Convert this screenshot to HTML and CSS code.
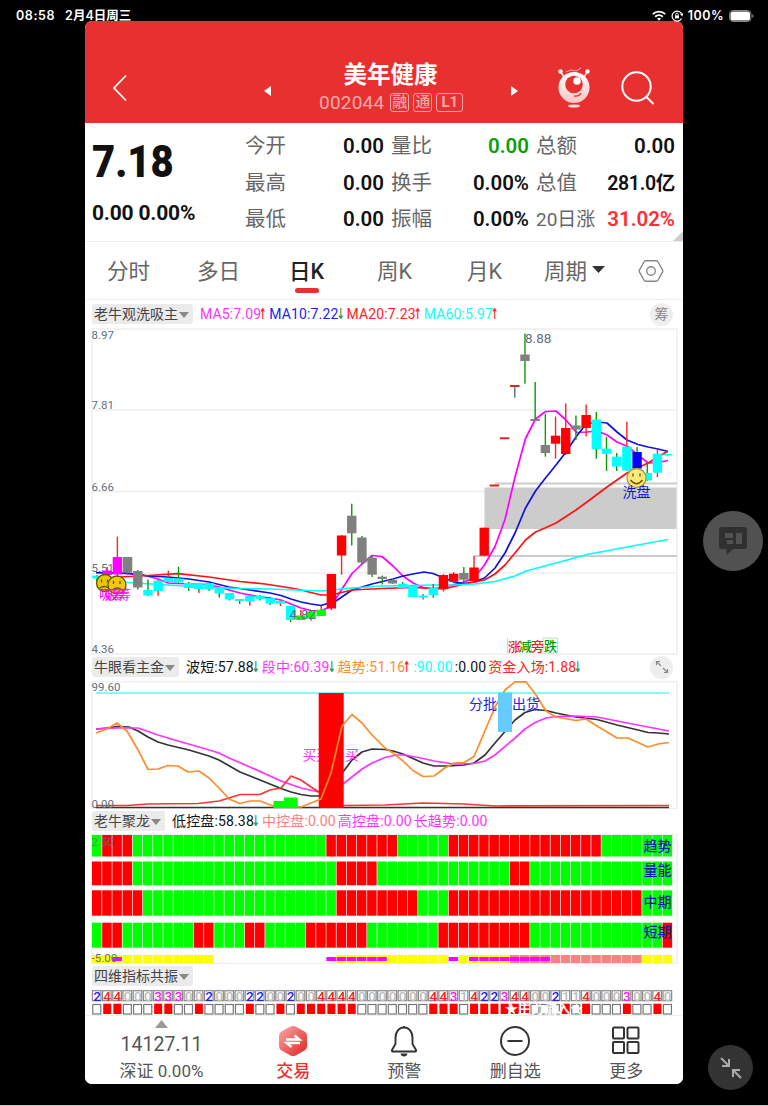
FILE: index.html
```html
<!DOCTYPE html>
<html lang="zh-CN">
<head>
    <meta charset="UTF-8">
    <meta name="viewport" content="width=device-width, initial-scale=1.0">
    <title>美年健康 002044</title>
    <link rel="stylesheet" href="styles.css">
</head>
<body>
    <div class="status">
        <span class="clock">08:58</span>
        <span class="date">2月4日周三</span>
        <span class="status-right">
            <svg width="14" height="11" viewBox="0 0 14 11" fill="none" stroke="#fff" stroke-width="1.9"><path d="M.8 4.1a9 9 0 0 1 12.4 0M3.2 6.7a5.6 5.6 0 0 1 7.6 0"/><path d="M5 8.6a3 3 0 0 1 4 0L7 10.8z" fill="#fff" stroke="none"/></svg>
            <svg width="12" height="12" viewBox="0 0 12 12" fill="none" stroke="#fff" stroke-width="1.2"><path d="M10.5 8.5A5 5 0 1 1 11 5M9.6 3.8L11 5.4l.8-2"/><rect x="4" y="5.4" width="4" height="3" fill="#fff" stroke="none"/><path d="M4.7 5.5V4.4a1.3 1.3 0 0 1 2.6 0v1.1" stroke-width=".9"/></svg>
            <span class="percent">100%</span>
            <svg width="25" height="12" viewBox="0 0 25 12"><rect x=".5" y=".5" width="21.5" height="11" rx="3.6" fill="none" stroke="#888"/><rect x="1.5" y="1.5" width="19.5" height="9" rx="2.6" fill="#fff"/><path d="M23.3 4v4q1.3-.6 1.3-2t-1.3-2" fill="#888"/></svg>
        </span>
    </div>

    <div class="app">
        <header class="header">
            <svg class="back" width="16" height="28" viewBox="0 0 16 28" fill="none" stroke="#fff" stroke-width="1.8"><path d="M15 1.5L3 14l12 12.5"/></svg>
            <svg class="prev" width="7" height="10" viewBox="0 0 7 10"><path d="M7 0v10L0 5z" fill="#fff"/></svg>
            <div class="title">
                <h1>美年健康</h1>
                <div class="code"><span class="number">002044</span><i>融</i><i>通</i><i class="level">L1</i></div>
            </div>
            <svg class="next" width="7" height="10" viewBox="0 0 7 10"><path d="M0 0v10l7-5z" fill="#fff"/></svg>
            <svg class="robot" width="34" height="42" viewBox="0 0 34 42">
                <defs><linearGradient id="body" x2="0" y2="1"><stop stop-color="#fff"/><stop offset="1" stop-color="#ffc4c4"/></linearGradient></defs>
                <path d="M4 5l4 7M30 5l-4 7" stroke="#fff" stroke-width="1.5"/>
                <circle cx="3.5" cy="4.5" r="2.2" fill="#fff"/><circle cx="30.5" cy="4.5" r="2.2" fill="#fff"/>
                <path d="M9 5l5-2 5 1 5-3" fill="none" stroke="#ffb5b5"/>
                <ellipse cx="17" cy="20.5" rx="15.5" ry="15.5" fill="url(#body)"/>
                <circle cx="17" cy="17.5" r="8.8" fill="#e83030"/><circle cx="20" cy="14" r="3.8" fill="#fff"/>
                <path d="M17 29q5 1 7-3" fill="none" stroke="#e83030" stroke-width="1.3"/>
                <ellipse cx="17" cy="39" rx="6" ry="1.6" fill="#ffdada"/>
            </svg>
            <svg class="search" width="34" height="34" viewBox="0 0 34 34" fill="none" stroke="#fff" stroke-width="2"><circle cx="15.5" cy="15.5" r="14.2"/><path d="M25 25.5l7.500 7.500"/></svg>
        </header>

        <section class="quote">
            <div class="price">
                <strong>7.18</strong>
                <span>0.00 0.00%</span>
            </div>
            <dl class="first">
                <dt>今开</dt><dd>0.00</dd>
                <dt>最高</dt><dd>0.00</dd>
                <dt>最低</dt><dd>0.00</dd>
            </dl>
            <dl class="second">
                <dt>量比</dt><dd class="down">0.00</dd>
                <dt>换手</dt><dd>0.00%</dd>
                <dt>振幅</dt><dd>0.00%</dd>
            </dl>
            <dl class="third">
                <dt>总额</dt><dd>0.00</dd>
                <dt>总值</dt><dd class="cap">281.0亿</dd>
                <dt class="rise">20日涨</dt><dd class="up">31.02%</dd>
            </dl>
            <span class="corner"></span>
        </section>

        <nav class="tabs">
            <span>分时</span>
            <span>多日</span>
            <span class="active">日K</span>
            <span>周K</span>
            <span>月K</span>
            <span class="period">周期<svg width="13" height="7" viewBox="0 0 13 7"><path d="M0 0h13L6.5 7z" fill="#333"/></svg></span>
            <svg class="setting" width="26" height="24" viewBox="0 0 28 24" fill="none" stroke="#888" stroke-width="1.5"><path d="M8.200 1h11.600q1 0 1.500.8L26.500 11q.5 1 0 2l-5.200 9.200q-.5.8-1.500.8H8.200q-1 0-1.500-.8L1.500 13q-.5-1 0-2l5.200-9.200q.5-.8 1.500-.8z"/><circle cx="14" cy="12" r="4.600"/></svg>
        </nav>

        <section class="panel kline">
            <div class="legend">
                <button>老牛观洗吸主</button>
                <span class="magenta">MA5:7.09</span><b class="rising">↑</b>
                <span class="blue">MA10:7.22</span><b class="falling">↓</b>
                <span class="red">MA20:7.23</span><b class="rising">↑</b>
                <span class="cyan">MA60:5.97</span><b class="rising">↑</b>
                <em class="round">筹</em>
            </div>
            <svg width="598" height="327" viewBox="85 328 598 327">
                <g class="grid">
                    <rect x="92" y="329" width="585" height="325"/>
                    <path d="M92 410h585M92 491.500h585M92 573h585"/>
                </g>
                <g class="axis">
                    <text x="91.500" y="339">8.97</text>
                    <text x="91.500" y="409">7.81</text>
                    <text x="91.500" y="490.500">6.66</text>
                    <text x="91.500" y="572">5.51</text>
                    <text x="91.500" y="653">4.36</text>
                </g>
                <rect x="484.500" y="487.500" width="192" height="41.500" fill="#ccc"/>
                <path d="M495 483.500h182M474 556h203" stroke="#ccc" stroke-width="1.800"/>
                <g class="line">
                    <polyline stroke="#f0f" points="96,573 117,573 143,575 158,579 168,583 178.500,583.500 199,584 209,585 219,587 229,590 240,593 250,595 260,597 270,598 281,600 291,604 301,608 311,610.500 321,611 331,606 342,589 352,573.500 362,564 372,555.500 382,556.500 393,566 403,576 413,583 423,587.500 433,589 444,587 464,582 474,578 484.500,565 495,546.500 505,519.500 515,477 525.500,438.500 535.500,419 545.500,411.500 556,411 566,420 576.500,432.500 586.500,432 597,431 607,435 617,442 627.500,446.500 638,455 648,463 658,462.500 668,460.500"/>
                    <polyline stroke="#11d" points="96,572.500 127,573 148,576 168,577 189,579 209,582 229,587 250,590 270,593 281,595.500 291,599 301,602 311,604 321,605.500 336,601 352,590 372,584 393,579 403,576 413,574 424,572 433,573.500 444,578 454,582 464,583.500 474,582 484.500,578 495,568 505,553 515,533 525.500,508 535.500,491 545.500,478 556,465 566,452 576,437 586,424 597,422 607,423 617,432 627,440 638,444.500 648,447 658,449 668,451.500"/>
                    <polyline stroke="#f11" points="120,577 148,575.500 178,573.700 209,577 240,581.500 265,584 291,588 301,590 321,595 331,595 352,590 382,588.500 413,587.500 444,589 464,584 475,582 484.500,580 495,574 505,565 515,553 525.500,540 535.500,532 545,528 556,523 576,510 587,502 607,487 627,473 648,463 668,451"/>
                    <polyline stroke="#0ff" points="96,580 127,582.500 168,585 199,587 240,588.500 270,589 321,591 352,588 382,586 434,585 454,585 475,584 495,581.500 515,576 526,571 556,563 587,554.500 627,547 668,539.500"/>
                </g>
                <g id="candles"></g>
                <g class="axis extreme">
                    <text x="289.500" y="619">4.82</text>
                    <text x="525" y="343">8.88</text>
                </g>
                <g class="face">
                    <circle cx="105" cy="583" r="8.500" fill="#e8c800"/><path d="M101.500 579.500v3M107.500 579.500v3M100 588q4-3 9 0"/>
                    <circle cx="117" cy="585" r="9" fill="#f0c814"/><path d="M113.500 581v3M120 581v3M112.500 590q5-4 9 0"/>
                    <circle cx="636.500" cy="478" r="9.500" fill="#ffe97a" stroke="#aa9840"/><path d="M633 473.500v3M640 473.500v3M630.500 480q6 7.500 12 0"/>
                </g>
                <text x="99" y="599" class="tag" fill="#f0f">吸筹</text>
                <text x="105" y="599" class="tag" fill="#f0f">吸筹</text>
                <text x="622.500" y="497" class="mark" fill="#11d">洗盘</text>
                <g class="events">
                    <path d="M507.500 638v15M543 638h14.500v15H543z" fill="none" stroke="#bde0bd"/>
                    <text x="508" y="651" fill="#e22">涨</text>
                    <text x="519" y="651" fill="#090">减</text>
                    <text x="531" y="651" fill="#e22">旁</text>
                    <text x="544" y="651" fill="#090">跌</text>
                </g>
            </svg>
        </section>

        <section class="panel money">
            <div class="legend">
                <button>牛眼看主金</button>
                <span>波短:57.88</span><b class="falling">↓</b>
                <span class="magenta">段中:60.39</span><b class="falling">↓</b>
                <span class="orange">趋势:51.16</span><b class="rising">↑</b>
                <span class="cyan">:90.00</span>
                <span>:0.00</span>
                <span class="red">资金入场:1.88</span><b class="falling">↓</b>
                <em class="round"><svg width="14" height="14" viewBox="0 0 14 14" fill="none" stroke="#888" stroke-width="1.200"><path d="M6 6L1.500 1.500M1.500 5V1.500H5M8 8l4.500 4.500M12.500 9v3.500H9"/></svg></em>
            </div>
            <svg width="598" height="128" viewBox="85 681 598 128">
                <rect class="frame" x="92" y="681.500" width="585" height="127"/>
                <g class="line">
                    <path d="M96 693h573" stroke="#5ff"/>
                    <path d="M96 807.500h573" stroke="#333"/>
                    <polyline stroke="#333" points="96,729 107,728 117,726.500 129,727 138,731 148,737 158,742 168,745 189,750 209,756 219,760 240,772 260,780 281,788.500 291,792 301,794.500 311,796 319,796 343,772 352,760 362,752 372,749 385,749.500 393,751 403,754 413,758.500 423,763 434,766 449,766 464,765 474,763 485,755 495,743 505,731.500 515,720 525,712.500 535,709.500 546,710.500 556,713 576,717 597,719.500 617,725 638,730 648,732.500 658,733 669,734"/>
                    <polyline stroke="#f3f" points="96,729 117,728 138,728 158,735 178,741 199,747 219,753 229,758 250,767 281,781 301,788 319,792 343,784 362,769 372,763 385,757.500 396,755 405,755 423,758.500 434,761 454,764 474,763.500 485,761 495,755 515,738 525,729 535,722.500 546,718 556,716.500 576,716 597,717 617,721 648,727 669,731"/>
                    <polyline stroke="#f33" points="96,805.500 127,805.500 148,804 198,803.500 219,801 229,798 240,794.500 260,794.500 270,790 281,788 291,776 301,780 311,787 319,792 343,805.500 385,805 423,803 464,804 495,806 669,805.500"/>
                </g>
                <g class="word" fill="#f3f"><text x="302.500" y="760">买</text><text x="316" y="760">买</text><text x="345" y="760">买</text></g>
                <rect x="318.700" y="693" width="25" height="115" fill="#f00"/>
                <g class="line"><polyline stroke="#ff8c2b" points="96,733 107,729 117,723 127,731 138,750 148,769.500 158,769 168,765.500 178,766 188,772 199,771 209,778 219,788 229,799 240,803.500 250,801 260,801 270,805 281,807 301,807 321,799 331,773 342,726 352,714.500 362,723 372,735 385,748 393,753 403,761 413,770.500 423,776.500 434,776 444,768.500 454,763 464,762.500 474,756.500 484,733 495,707 505,690 515,681.800 526,681.800 536,695 546,711 556,717 576,720.500 586,719 597,726 617,738 628,738 648,747 658,744 669,742.500"/></g>
                <path d="M273.500 801h10.500v-3.500h13.700v10.500h-24.200z" fill="#0f0"/>
                <rect x="498" y="692.500" width="14" height="39.500" fill="#6cf"/>
                <g class="word" fill="#22e"><text x="469" y="709">分批</text><text x="512" y="709">出货</text></g>
                <g class="axis"><text x="91.500" y="691">99.60</text><text x="91.500" y="807.500">0.00</text></g>
            </svg>
        </section>

        <section class="panel trend">
            <div class="legend">
                <button>老牛聚龙</button>
                <span>低控盘:58.38</span><b class="falling">↓</b>
                <span class="salmon">中控盘:0.00</span>
                <span class="magenta">高控盘:0.00</span>
                <span class="magenta">长趋势:0.00</span>
            </div>
            <svg width="598" height="130" viewBox="85 834 598 130">
                <rect class="frame" x="92" y="834.500" width="585" height="129"/>
                <g id="strips"></g>
                <g class="word strong" fill="#0b1bb0"><text x="643.500" y="851">趋势</text><text x="643.500" y="875">量能</text><text x="643.500" y="907">中期</text><text x="643.500" y="937">短期</text></g>
                <g class="axis"><text x="91.500" y="845.500" opacity=".7">2.50</text><text x="91.500" y="962">-5.00</text></g>
            </svg>
        </section>

        <section class="panel resonance">
            <div class="legend">
                <button>四维指标共振</button>
            </div>
            <svg width="598" height="26" viewBox="85 989 598 26">
                <g id="cells"></g>
                <text class="inflow" x="505" y="1012.500">★主力流入★</text>
            </svg>
        </section>

        <footer class="bottom">
            <div class="index">
                <svg width="13" height="8" viewBox="0 0 13 8"><path d="M6.500 0L13 8H0z" fill="#999"/></svg>
                <strong>14127.11</strong>
                <span>深证 0.00%</span>
            </div>
            <div class="item trade">
                <svg width="30" height="32" viewBox="0 0 30 32">
                    <defs><linearGradient id="hex" x2="1" y2="1"><stop stop-color="#f8aaa6"/><stop offset="1" stop-color="#e2201f"/></linearGradient></defs>
                    <path d="M12.500 1.600q2.500-1.400 5 0l9 5q2.500 1.500 2.500 4.400v10q0 2.900-2.500 4.400l-9 5q-2.500 1.400-5 0l-9-5Q1 23.900 1 21V11q0-2.900 2.500-4.400z" fill="url(#hex)"/>
                    <path d="M8 14.500h13.500l-5-4M22 18H8.500l5 4" fill="none" stroke="#fff" stroke-width="2.300"/>
                </svg>
                <span>交易</span>
            </div>
            <div class="item">
                <svg width="28" height="32" viewBox="0 0 28 32" fill="none" stroke="#333" stroke-width="1.900"><path d="M14 1v2M14 2.500C8 2.500 5.500 8 5.500 13v6L2 25q-.5 1.500.8 1.500h22.400q1.300 0 .8-1.500l-3.500-6v-6C22.500 8 20 2.500 14 2.500z"/><path d="M10.500 28.500h7Q17 31.500 14 31.500t-3.500-3z" fill="#333" stroke="none"/></svg>
                <span>预警</span>
            </div>
            <div class="item">
                <svg width="32" height="32" viewBox="0 0 32 32" fill="none" stroke="#333" stroke-width="2"><circle cx="16" cy="16" r="14"/><path d="M8.500 16h15"/></svg>
                <span>删自选</span>
            </div>
            <div class="item">
                <svg width="30" height="32" viewBox="0 0 30 32" fill="none" stroke="#333" stroke-width="2"><rect x="2" y="2.500" width="11" height="11" rx="1"/><rect x="16.500" y="2.500" width="11" height="11" rx="1"/><rect x="2" y="17" width="11" height="11" rx="1"/><rect x="16.500" y="17" width="11" height="11" rx="1"/></svg>
                <span>更多</span>
            </div>
        </footer>
    </div>

    <div class="floating message">
        <svg width="30" height="30" viewBox="0 0 30 30"><path d="M4 1h22q3 0 3 3v16q0 3-3 3H15l-6.500 6V23H4q-3 0-3-3V4q0-3 3-3z" fill="#303030"/><path d="M7 7h8v5H7zM9 14h6v4H9zM18 7h6v11h-6z" fill="#515151"/></svg>
    </div>
    <div class="floating shrink">
        <svg width="22" height="22" viewBox="0 0 22 22" fill="none" stroke="#aaa" stroke-width="2"><path d="M1 1l8 8M9 2v7H2M21 21l-8-8M13 20v-7h7"/></svg>
    </div>
    <script src="script.js"></script>
</body>
</html>
```
FILE: styles.css
```css
body {
    position: relative;
    width: 768px;
    height: 1105px;
    margin: 0;
    background: #000;
    border-bottom: 1px solid #ccc;
    font-family: Roboto, "Noto Sans CJK SC", sans-serif;
    color: #111;
    overflow: hidden;
}

h1, dl, dd {
    margin: 0;
}

svg {
    display: block;
    flex-shrink: 0;
}

.status {
    display: flex;
    align-items: center;
    height: 21px;
    padding: 5px 14px 0 16px;
    margin-bottom: -5px;
    color: #fff;
    font: 600 12.500px/21px Inter, "Noto Sans CJK SC", sans-serif;
}

.clock {
    letter-spacing: 0.6px;
    margin-right: 10px;
}

.status-right {
    display: flex;
    align-items: center;
    gap: 5px;
    margin-left: auto;
}

.percent {
    letter-spacing: 0.5px;
}

.app {
    width: 598px;
    height: 1063px;
    margin-left: 85px;
    background: #fff;
    border-radius: 7px;
    overflow: hidden;
}

/* Header */
.header {
    display: flex;
    box-sizing: border-box;
    height: 102px;
    padding: 32px 28px 0 26px;
    align-items: center;
    background: #e83030;
    color: #fff;
}

.prev, .next {
    margin-top: 6px;
}

.prev {
    margin-left: 137px;
}

.title {
    width: 146px;
    margin: 0 47px 0 48px;
    text-align: center;
    white-space: nowrap;
}

.title h1 {
    margin-top: -2px;
    padding-right: 2px;
    font-size: 23.5px;
    line-height: 30px;
}

.code {
    display: flex;
    align-items: center;
    gap: 4px;
    height: 24px;
    color: #f6a9a9;
}

.code .number {
    margin-right: 2px;
    font-size: 19px;
    letter-spacing: 0.2px;
}

.code i {
    box-sizing: border-box;
    width: 19px;
    height: 19px;
    border: 1px solid #f6a9a9;
    border-radius: 3px;
    font: 500 15px/17px Roboto, "Noto Sans CJK SC", sans-serif;
}

.code .level {
    width: 27px;
    font-weight: 700;
}

.robot {
    margin-left: 39px;
}

.search {
    margin-left: 30px;
}

/* Quote */
.quote {
    position: relative;
    display: flex;
    height: 118px;
    border-bottom: 1px solid #eee;
}

.price {
    width: 160px;
    padding-left: 7px;
    box-sizing: border-box;
    font-weight: 700;
}

.price strong {
    display: block;
    margin-top: 11px;
    font-size: 44px;
    line-height: 56px;
    transform: scaleX(0.91);
    transform-origin: left;
}

.price span {
    display: block;
    margin-top: 9px;
    font-size: 21px;
    line-height: 28px;
    letter-spacing: -0.2px;
}

.quote dl {
    display: grid;
    grid-template-columns: auto auto;
    grid-auto-rows: 36.500px;
    justify-content: space-between;
    align-content: start;
    padding-top: 5px;
    line-height: 37px;
    white-space: nowrap;
}

.quote .first {
    width: 139px;
}

.quote .second {
    width: 138px;
    margin-left: 7px;
}

.quote .third {
    width: 139px;
    margin-left: 7px;
}

.quote dt {
    font-size: 20.500px;
    color: #666;
}

.quote dt.rise {
    font-size: 19px;
}

.quote dd {
    font-size: 20.500px;
    font-weight: 600;
    text-align: right;
}

.quote dd.cap {
    font-size: 19.500px;
    letter-spacing: -0.3px;
}

.quote .down {
    color: #0a9f0a;
}

.quote .up {
    color: #ff2c32;
}

.corner {
    position: absolute;
    right: 0;
    bottom: 0;
    border: 5px solid transparent;
    border-right-color: #ccc;
    border-bottom-color: #ccc;
}

/* Tabs */
.tabs {
    display: flex;
    align-items: center;
    height: 57px;
    padding-left: 22px;
    border-bottom: 1px solid #eee;
    color: #666;
    font-size: 21.500px;
}

.tabs span {
    position: relative;
    top: -1px;
    width: 90px;
    white-space: nowrap;
}

.tabs .active {
    color: #222;
    margin-left: 2px;
    width: 88px;
    font-weight: 500;
}

.tabs .active::after {
    content: "";
    position: absolute;
    left: 6px;
    bottom: -8px;
    width: 24px;
    height: 5px;
    border-radius: 3px;
    background: #e83030;
}

.tabs .period {
    display: flex;
    align-items: center;
    gap: 5px;
    width: 94px;
    margin-left: -13px;
}

/* Indicator panels */
.legend {
    display: flex;
    align-items: center;
    box-sizing: border-box;
    height: 28px;
    padding-left: 7px;
    font-size: 14px;
    line-height: 20px;
    letter-spacing: 0.15px;
    white-space: nowrap;
}

.legend span {
    margin-left: 2px;
}

.legend button {
    display: flex;
    align-items: center;
    height: 20px;
    margin: 0 5px 0 0;
    padding: 0 4px 0 2px;
    border: 0;
    border-radius: 3px;
    background: #ebebeb;
    font: 14px/20px Roboto, "Noto Sans CJK SC", sans-serif;
    color: #444;
}

.legend button::after {
    content: "";
    margin: 2px 0 0 1px;
    border: 5px solid transparent;
    border-top: 6px solid #888;
    border-bottom: 0;
}

.legend b {
    width: 7px;
    margin: 0 1px 0 -2px;
    font: bold 15px/20px "DejaVu Sans", sans-serif;
    transform: scaleX(0.6);
    transform-origin: left;
}

.rising, .red {
    color: #f22;
}

.falling {
    color: #2a9a48;
}

.magenta {
    color: #f3f;
}

.blue {
    color: #22e;
}

.cyan {
    color: #1ff;
}

.orange {
    color: #ff8c2b;
}

.salmon {
    color: #ff8080;
}

.round {
    display: flex;
    align-items: center;
    justify-content: center;
    width: 23px;
    height: 23px;
    margin: 0 10px 0 auto;
    border-radius: 50%;
    background: #eee;
    color: #888;
    font-size: 14px;
    font-style: normal;
}

.money .legend {
    height: 26px;
    padding-bottom: 2px;
}

.trend .legend {
    height: 25px;
    padding-bottom: 2px;
}

.resonance .legend {
    height: 25px;
    padding-bottom: 2px;
}

.grid, .frame {
    fill: none;
    stroke: #eee;
    stroke-width: 1.500;
}

.axis {
    fill: #5f7080;
    font-size: 11.500px;
}

.extreme {
    font-size: 13.500px;
}

.line {
    fill: none;
    stroke-width: 1.700;
    stroke-linejoin: round;
}

.face {
    fill: none;
    stroke: #665200;
    stroke-width: 1.300;
}

.tag, .events {
    font-size: 13px;
}

.events {
    font-weight: 500;
}

.mark, .word {
    font-size: 14px;
}

.strong {
    font-weight: 500;
}

.digit {
    font-size: 13.500px;
    font-weight: 500;
    text-anchor: middle;
}

.inflow {
    fill: #fff;
    font-size: 13px;
    font-weight: 700;
}

/* Bottom bar */
.bottom {
    display: flex;
    height: 69px;
    border-top: 1px solid #eee;
    background: #fff;
    color: #555;
}

.index {
    display: flex;
    flex-direction: column;
    align-items: center;
    width: 153px;
    padding-top: 4px;
}

.index strong {
    margin-top: 4px;
    font-size: 19.500px;
    font-weight: 400;
    line-height: 26px;
}

.index span {
    font-size: 17px;
    line-height: 27px;
}

.item {
    display: flex;
    flex-direction: column;
    align-items: center;
    width: 111.300px;
    padding-top: 9px;
    margin-left: -0.300px;
    font-size: 17px;
    line-height: 29px;
}

.trade {
    color: #e83030;
    font-weight: 500;
}

/* Buttons floating beside the app */
.floating {
    position: absolute;
    display: flex;
    align-items: center;
    justify-content: center;
    border-radius: 50%;
}

.message {
    left: 703px;
    top: 511px;
    width: 60px;
    height: 60px;
    background: #515151;
}

.shrink {
    left: 708px;
    top: 1045px;
    width: 45px;
    height: 45px;
    background: #333;
}
```
FILE: script.js
```js
const NS = 'http://www.w3.org/2000/svg';
const STEP = 10.19;
const LEFT = 92;

function add(parent, tag, attrs, text) {
    const el = document.createElementNS(NS, tag);
    for (const key in attrs) el.setAttribute(key, attrs[key]);
    if (text !== undefined) el.textContent = text;
    parent.appendChild(el);
}

// body colour, body top, body bottom, wick colour, wick top, wick bottom
const colors = { c: '#0ff', m: '#f0f', k: '#808080', r: '#f00', g: '#0f0', b: '#00f', d: '#d22' };
const wicks = { r: '#f22', g: '#0a9a0a', s: '#5f7080' };
const candles = [
    ['c', 575.6, 578.5, 'g', 575, 584], ['m', 570.5, 575, 'r', 567, 575], ['m', 557, 574.5, 'r', 536.7, 577],
    ['k', 557, 572.5, 'g', 557, 575], ['k', 571, 587.5, 'g', 570, 589.5], ['c', 590, 595.5, 'g', 579.5, 596],
    ['c', 580.7, 591, 'r', 580, 595.8], ['c', 578, 582, 'r', 570.7, 582], ['c', 578.5, 582.5, 'g', 566.7, 583.5],
    ['c', 583, 588, 'g', 582, 591], ['c', 583, 589, 'r', 583, 593], ['c', 583, 589.5, 'g', 583, 591],
    ['c', 587, 593.5, 'g', 587, 597.7], ['c', 593, 599.5, 'g', 593, 600.5], ['c', 599, 601, 'g', 599, 604],
    ['c', 595.7, 601.5, 'r', 595, 605.5], ['c', 596, 599, 'g', 595, 600.5], ['c', 598, 603.7, 'g', 597, 605],
    ['c', 600.7, 603.5, 'r', 600, 606], ['c', 606, 620, 'g', 606, 622], ['g', 615.5, 620, 'r', 610, 620],
    ['g', 611.7, 618.5, 'r', 610, 620.7], ['g', 609.7, 616, 'r', 606, 616], ['r', 574, 608.5, 'r', 574, 610],
    ['r', 535.5, 555.5, 'r', 535, 574.7], ['k', 515.7, 533.3, 'g', 503.7, 545.5], ['k', 537.5, 562.5, 'g', 536, 564],
    ['k', 557.7, 574.7, 'g', 556, 577], ['k', 576.7, 579, 'g', 575.5, 584.5], ['k', 580, 583.5, 'g', 579, 584],
    ['c', 583.7, 588, 'g', 582, 588], ['c', 585.5, 597, 'g', 585, 597], ['c', 595.5, 597.5, 's', 594, 599.5],
    ['c', 588, 595, 'r', 584, 597.7], ['r', 575, 588.5, 'r', 574, 591.5], ['r', 573.7, 581.7, 'r', 572, 582],
    ['k', 573, 579.7, 'g', 567, 582], ['r', 567.5, 581, 'r', 556, 581], ['r', 527.7, 555.7, 'r', 527.7, 556],
    ['d', 484.5, 486.5, 'r', 485, 486], ['d', 437.3, 439.2, 'r', 438, 439], ['d', 385, 387, 's', 386, 397.7],
    ['k', 354.5, 361, 'g', 333.5, 383.7], ['k', 419, 421, 'g', 382, 421], ['k', 445, 453, 'g', 414, 456.7],
    ['r', 435.7, 443.7, 'r', 416.7, 458.7], ['r', 428, 454, 'r', 403.5, 455], ['k', 425.5, 429.5, 'g', 415.5, 440],
    ['r', 415, 428, 'r', 404.5, 436.5], ['c', 419.5, 449, 'g', 412, 458.7], ['c', 448.7, 454, 'g', 437, 471],
    ['c', 456.7, 466.5, 'g', 453, 471], ['c', 446.5, 470.5, 'r', 421.7, 471], ['b', 452, 468.5, 'g', 447, 469],
    ['c', 473, 480.5, 'g', 462, 481], ['c', 453.7, 472.7, 'r', 450, 477], ['c', 454, 455.5, 's', 454, 455.5]
];
const chart = document.getElementById('candles');
candles.forEach(([body, top, bottom, wick, high, low], i) => {
    const x = LEFT + STEP * i + 4.9;
    add(chart, 'rect', { x: x - 0.6, y: high, width: 1.4, height: low - high, fill: wicks[wick] });
    add(chart, 'rect', { x: x - 4.6, y: top, width: 9.4, height: bottom - top, fill: colors[body] });
});

// run lengths of red, green, yellow, pink and magenta cells
const strips = document.getElementById('strips');
const fills = { R: '#f00', G: '#0f0', Y: '#ff0', P: '#ff8080', M: '#f0f' };
function strip(y, height, runs) {
    let i = 0;
    for (const [, kind, count] of runs.matchAll(/([A-Z_])(\d+)/g)) {
        for (let n = 0; n < +count; n++, i++) {
            if (kind !== '_') add(strips, 'rect', { x: LEFT + STEP * i, y, width: 9.5, height, fill: fills[kind] });
        }
    }
}
strip(835, 21.5, 'G1R3G19R7G5R15G7');
strip(861.5, 23.8, 'R4G20R4G13R2G14');
strip(890.3, 25.4, 'R5G19R8G3R19G3');
strip(922.7, 25, 'G1R2G7R2G3R2G4R6G7R9G13R1');
strip(955, 8, 'Y12_12Y11_1Y5P13Y3');
strip(957, 4, '_2M1_20M6_6M1_1M8');

// resonance score on top, signal box below
const scores = '244000333002000220020044440000000443142234400211400030040';
const signals = '011000110010000100101111110000000111011111100010100010010';
const inks = { 0: '#bbb', 1: '#bbb', 2: '#22e', 3: '#e2e', 4: '#e22' };
const cells = document.getElementById('cells');
for (let i = 0; i < scores.length; i++) {
    const x = LEFT + STEP * i;
    add(cells, 'rect', { x: x + 0.4, y: 990.7, width: 8.6, height: 10, fill: '#fff', stroke: '#888', 'stroke-width': 1.2 });
    add(cells, 'text', { class: 'digit', x: x + 5, y: 1001, fill: inks[scores[i]] }, scores[i]);
    if (signals[i] === '1') {
        add(cells, 'rect', { x: x + 1, y: 1003.7, width: 8, height: 10.3, fill: '#f00' });
    } else {
        add(cells, 'rect', { x: x + 0.8, y: 1004.5, width: 8, height: 9.5, fill: '#fff', stroke: '#777', 'stroke-width': 1.2 });
    }
}
```
